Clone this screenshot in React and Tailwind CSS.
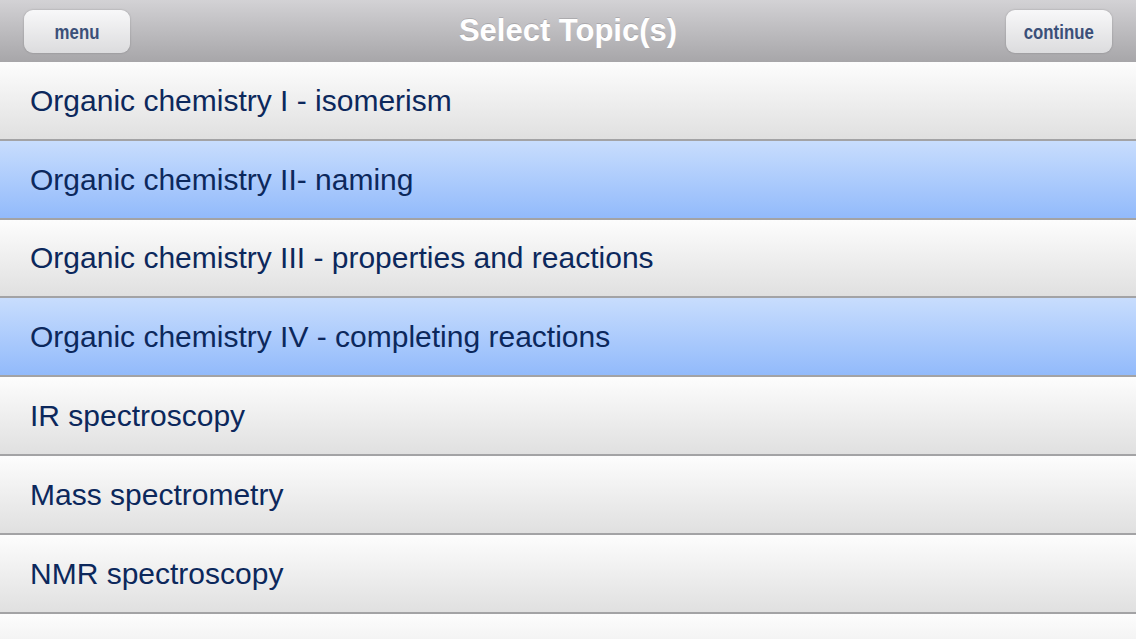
const topics = [
  { name: "Organic chemistry I - isomerism", selected: false },
  { name: "Organic chemistry II- naming", selected: true },
  { name: "Organic chemistry III - properties and reactions", selected: false },
  { name: "Organic chemistry IV - completing reactions", selected: true },
  { name: "IR spectroscopy", selected: false },
  { name: "Mass spectrometry", selected: false },
  { name: "NMR spectroscopy", selected: false },
  { name: "", selected: false },
];

function BarButton({ label }) {
  return (
    <button className="h-[43px] w-[106px] rounded-[9px] bg-gradient-to-b from-[#f8f8f9] to-[#dcdcde] shadow-[0_0_2px_rgba(0,0,0,0.25)] flex items-center justify-center">
      <span className="inline-block scale-x-[0.8] text-[21px] font-bold text-[#3b5079] font-['Liberation_Sans',sans-serif]">
        {label}
      </span>
    </button>
  );
}

export default function App() {
  return (
    <div className="w-[1136px] h-[639px] overflow-hidden bg-white font-['Liberation_Sans',Arial,sans-serif]">
      {/* top bar */}
      <div className="h-[62px] flex items-center justify-between px-[24px] pt-px bg-gradient-to-b from-[#d3d2d5] to-[#a7a6a9]">
        <BarButton label="menu" />
        <h1 className="text-[31px] font-bold text-white [text-shadow:0_-1px_0_rgba(0,0,0,0.15)]">
          Select Topic(s)
        </h1>
        <BarButton label="continue" />
      </div>

      {/* topic list */}
      <div className="flex flex-col">
        {topics.map((t, i) => (
          <div
            key={i}
            className={`h-[78.8px] shrink-0 flex items-center pl-[30px] border-b-2 border-[#a3a3a5] text-[30px] text-[#0c285c] ${
              t.selected
                ? "bg-gradient-to-b from-[#c8ddfd] to-[#92bafb]"
                : "bg-gradient-to-b from-[#fdfdfd] to-[#e0e0e0]"
            }`}
          >
            {t.name}
          </div>
        ))}
      </div>
    </div>
  );
}
